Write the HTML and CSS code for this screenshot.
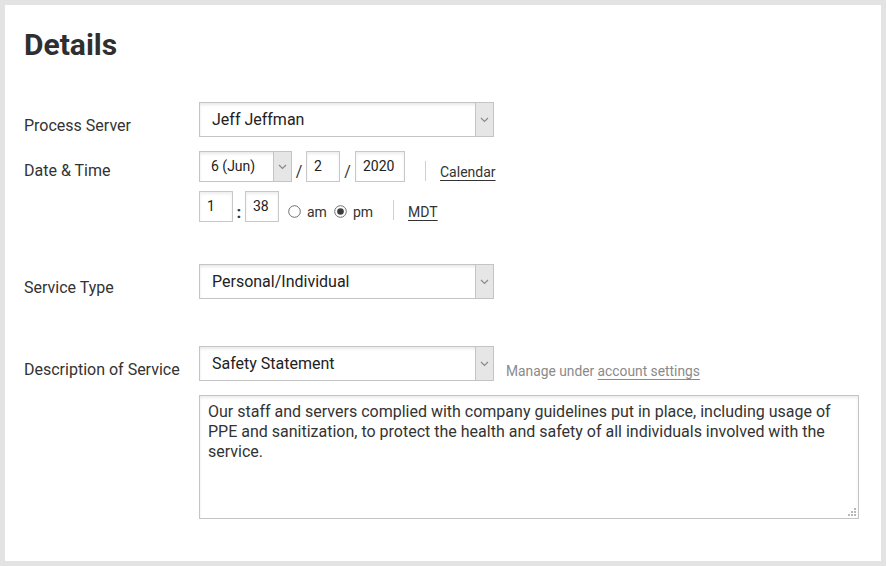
FILE: index.html
```html
<!DOCTYPE html>
<html lang="en">
<head>
<meta charset="utf-8">
<title>Details</title>
<link rel="stylesheet" href="styles.css">
</head>
<body>
<div class="panel">
  <h1 class="title">Details</h1>

  <div class="row row-server">
    <div class="label">Process Server</div>
    <div class="field">
      <div class="select select-wide">
        <span class="select-text">Jeff Jeffman</span>
        <span class="select-arrow"><svg width="9" height="6" viewBox="0 0 9 6"><path d="M1 1 L4.5 4.5 L8 1" fill="none" stroke="#8a8a8a" stroke-width="1.2"/></svg></span>
      </div>
    </div>
  </div>

  <div class="row row-date">
    <div class="label label-date">Date &amp; Time</div>
    <div class="field">
      <div class="line">
        <div class="select select-small">
          <span class="select-text select-text-small">6 (Jun)</span>
          <span class="select-arrow"><svg width="9" height="6" viewBox="0 0 9 6"><path d="M1 1 L4.5 4.5 L8 1" fill="none" stroke="#8a8a8a" stroke-width="1.2"/></svg></span>
        </div>
        <span class="slash">/</span>
        <span class="input input-2">2</span>
        <span class="slash slash-2">/</span>
        <span class="input input-4">2020</span>
        <span class="divider"></span>
        <span class="link">Calendar</span>
      </div>
      <div class="line line-time">
        <span class="input input-2">1</span>
        <span class="colon">:</span>
        <span class="input input-2">38</span>
        <span class="radio radio-am"><svg width="13" height="13" viewBox="0 0 13 13"><circle cx="6.5" cy="6.5" r="5.8" fill="#fff" stroke="#6e6e6e" stroke-width="1"/></svg></span>
        <span class="radio-label">am</span>
        <span class="radio radio-pm"><svg width="13" height="13" viewBox="0 0 13 13"><circle cx="6.5" cy="6.5" r="5.8" fill="#fff" stroke="#6e6e6e" stroke-width="1"/><circle cx="6.5" cy="6.5" r="3.3" fill="#3c3c3c"/></svg></span>
        <span class="radio-label">pm</span>
        <span class="divider divider-time"></span>
        <span class="link">MDT</span>
      </div>
    </div>
  </div>

  <div class="row row-type">
    <div class="label">Service Type</div>
    <div class="field">
      <div class="select select-wide">
        <span class="select-text">Personal/Individual</span>
        <span class="select-arrow"><svg width="9" height="6" viewBox="0 0 9 6"><path d="M1 1 L4.5 4.5 L8 1" fill="none" stroke="#8a8a8a" stroke-width="1.2"/></svg></span>
      </div>
    </div>
  </div>

  <div class="row row-desc">
    <div class="label">Description of Service</div>
    <div class="field">
      <div class="line line-desc">
        <div class="select select-wide">
          <span class="select-text">Safety Statement</span>
          <span class="select-arrow"><svg width="9" height="6" viewBox="0 0 9 6"><path d="M1 1 L4.5 4.5 L8 1" fill="none" stroke="#8a8a8a" stroke-width="1.2"/></svg></span>
        </div>
        <span class="manage">Manage under <span class="manage-link">account settings</span></span>
      </div>
      <div class="textarea">Our staff and servers complied with company guidelines put in place, including usage of PPE and sanitization, to protect the health and safety of all individuals involved with the service.<span class="grip"><svg width="9" height="9" viewBox="0 0 9 9"><g fill="#b8b8b8"><rect x="7" y="1" width="2" height="2"/><rect x="4" y="4" width="2" height="2"/><rect x="7" y="4" width="2" height="2"/><rect x="1" y="7" width="2" height="2"/><rect x="4" y="7" width="2" height="2"/><rect x="7" y="7" width="2" height="2"/></g></svg></span></div>
    </div>
  </div>
</div>
</body>
</html>
```

FILE: styles.css
```css
* {
  box-sizing: border-box;
}

html,
body {
  margin: 0;
  height: 100%;
}

body {
  background: #e3e3e3;
  padding: 5px;
  font-family: Roboto, "Noto Sans", "Liberation Sans", sans-serif;
  color: #333;
}

.panel {
  background: #fff;
  height: 100%;
  padding: 22px 19px 0;
}

.title {
  font-size: 30px;
  font-weight: 700;
  line-height: 36px;
  margin: 0 0 39px;
  color: #2f2f2f;
}

.row {
  display: flex;
}

.row-date {
  margin-top: 14px;
}

.row-type {
  margin-top: 42px;
}

.row-desc {
  margin-top: 47px;
}

.label {
  width: 175px;
  flex: none;
  font-size: 16px;
  line-height: 20px;
  padding-top: 14px;
  color: #333;
}

.label-date {
  padding-top: 10px;
}

.field {
  display: flex;
  flex-direction: column;
}

.select {
  display: flex;
  height: 35px;
  border: 1px solid #c4c4c4;
  background: #fff;
  box-shadow: inset 0 2px 3px rgba(0, 0, 0, 0.09);
}

.select-wide {
  width: 295px;
}

.select-small {
  width: 93px;
  height: 31px;
}

.select-text {
  flex: 1;
  padding-left: 12px;
  font-size: 16px;
  line-height: 33px;
  color: #222;
  white-space: nowrap;
}

.select-text-small {
  padding-left: 11px;
  font-size: 14px;
  line-height: 29px;
}

.select-arrow {
  width: 18px;
  flex: none;
  background: #e6e6e6;
  border-left: 1px solid #c4c4c4;
  display: flex;
  align-items: center;
  justify-content: center;
}

.line {
  display: flex;
  align-items: flex-end;
}

.line-time {
  margin-top: 9px;
}

.input {
  display: block;
  height: 31px;
  border: 1px solid #c8c8c8;
  box-shadow: inset 0 2px 3px rgba(0, 0, 0, 0.07);
  padding-left: 7px;
  font-size: 14px;
  line-height: 29px;
  color: #222;
}

.input-2 {
  width: 34px;
}

.input-4 {
  width: 50px;
}

.slash {
  width: 14px;
  text-align: center;
  font-size: 16px;
  line-height: 20px;
  color: #333;
}

.slash-2 {
  width: 15px;
}

.colon {
  width: 12px;
  text-align: center;
  font-size: 17px;
  font-weight: 700;
  line-height: 20px;
  color: #333;
}

.divider {
  width: 1px;
  height: 20px;
  background: #d0d0d0;
  margin: 0 14px 1px 20px;
}

.divider-time {
  margin-bottom: 2px;
}

.link {
  font-size: 14px;
  line-height: 20px;
  color: #333;
  text-decoration: underline;
  text-underline-offset: 3px;
}

.radio {
  display: block;
  width: 13px;
  height: 13px;
  margin-bottom: 4px;
}

.radio svg {
  display: block;
}

.radio-am {
  margin-left: 9px;
}

.radio-pm {
  margin-left: 7px;
}

.radio-label {
  margin-left: 6px;
  font-size: 14px;
  line-height: 20px;
  color: #333;
}

.manage {
  margin-left: 12px;
  font-size: 13.8px;
  line-height: 20px;
  color: #8a8a8a;
}

.manage-link {
  text-decoration: underline;
  text-underline-offset: 3px;
}

.textarea {
  position: relative;
  margin-top: 14px;
  width: 660px;
  height: 124px;
  border: 1px solid #c4c4c4;
  box-shadow: inset 0 2px 3px rgba(0, 0, 0, 0.08);
  padding: 6px 8px;
  font-size: 16px;
  line-height: 20px;
  color: #333;
}

.grip {
  position: absolute;
  right: 2px;
  bottom: 2px;
  width: 9px;
  height: 9px;
}

.grip svg {
  display: block;
}
```
